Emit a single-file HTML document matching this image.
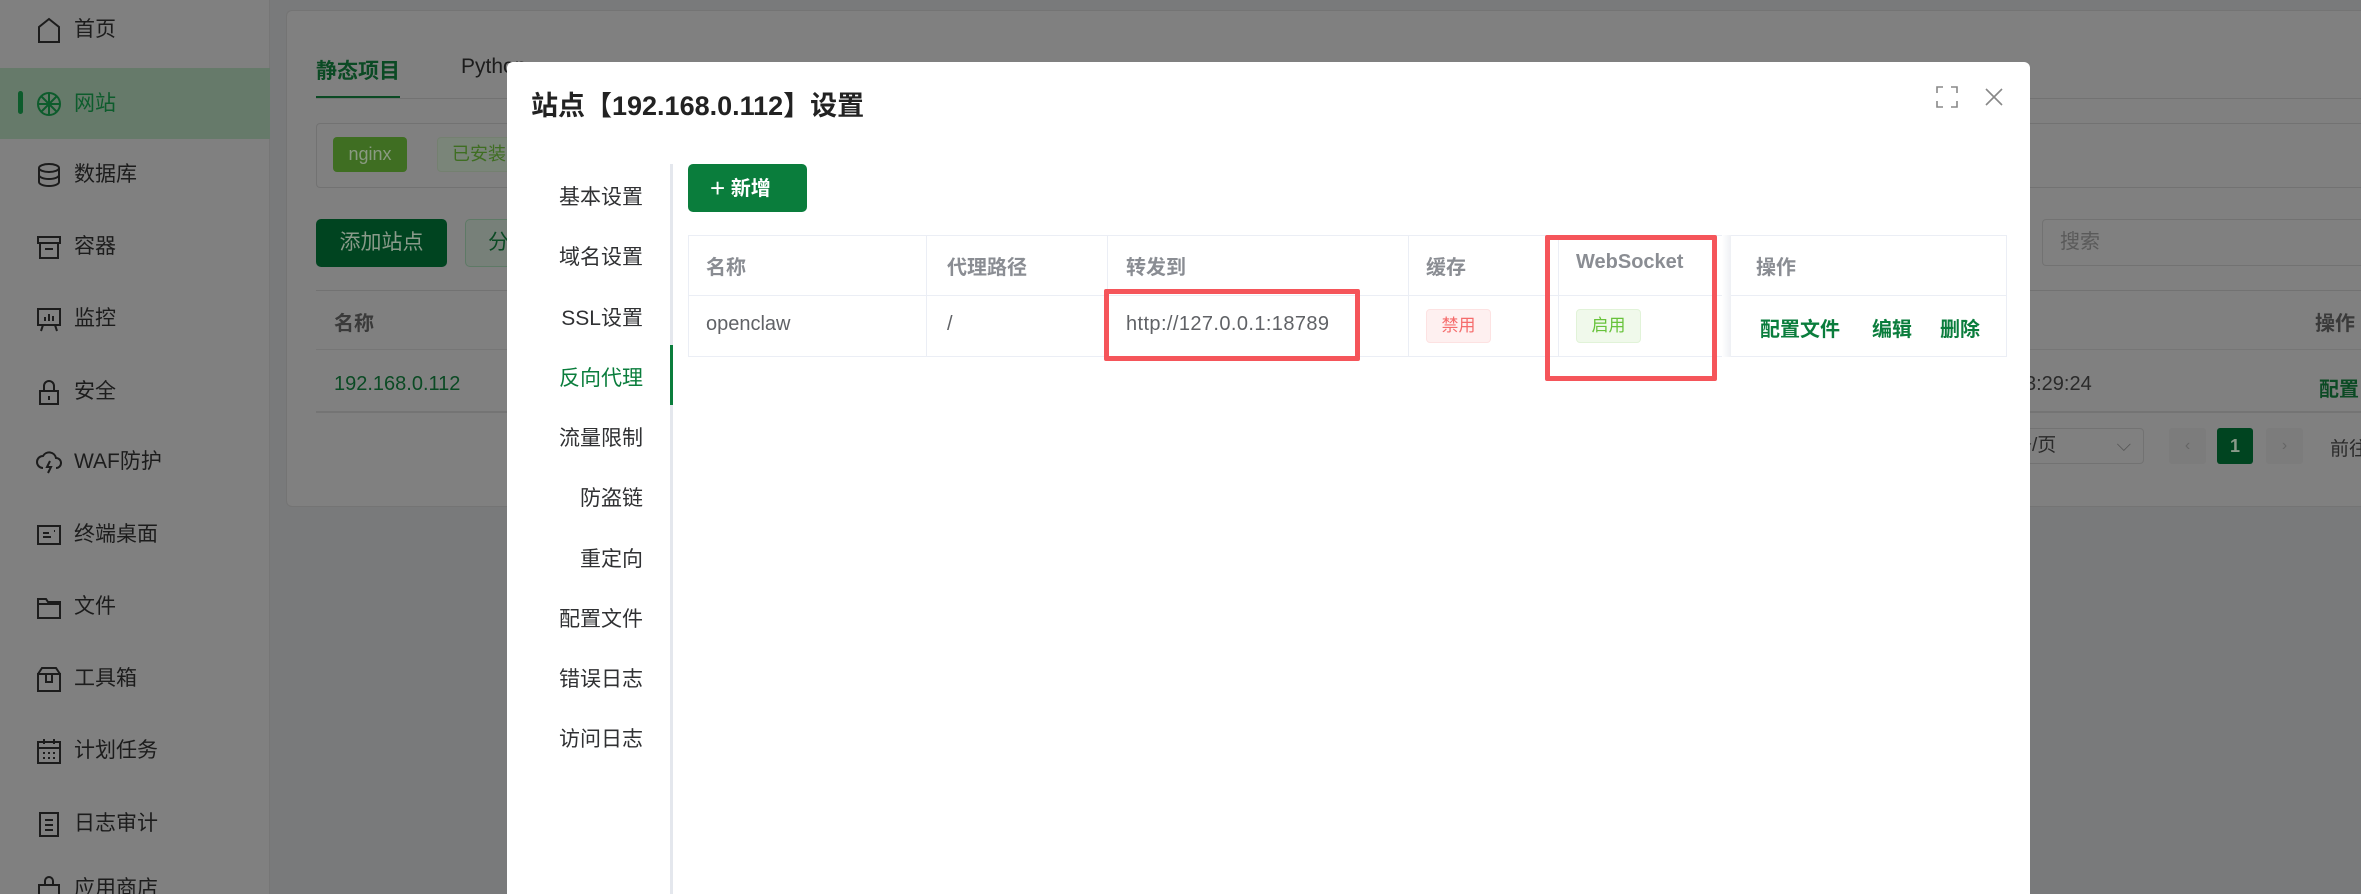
<!DOCTYPE html>
<html style="overflow:hidden;height:894px"><head><meta charset="utf-8"><style>
*{margin:0;padding:0;box-sizing:border-box}
body{width:2361px;height:894px;overflow:hidden;background:#797a7b;font-family:"Liberation Sans","Noto Sans CJK SC",sans-serif;position:relative;color:#1c1c1c}
.a{position:absolute;white-space:nowrap}
.side{left:0;top:0;width:270px;height:894px;background:#808080;border-right:1px solid #767676}
.si{left:0;width:270px;height:72px;font-size:21px;line-height:72px;overflow:hidden}
.si svg{position:absolute;left:35px;top:22px;width:28px;height:28px;fill:none;stroke:#1c1c1c;stroke-width:2}
.si span{position:absolute;left:74px}
.card{left:286px;top:10px;width:2075px;height:497px;background:#808080;border:1px solid #747474;border-right:none;border-radius:6px 0 0 6px}
.modal{left:507px;top:62px;width:1523px;height:832px;background:#fff;border-radius:6px 6px 0 0;overflow:hidden}
.mi{font-size:21px;color:#303133;right:0}
.th{font-size:20px;color:#8a8d93;font-weight:bold}
.td{font-size:20px;color:#606266}
.vl{position:absolute;width:1px;background:#ebeef5}
.op{font-size:20px;color:#0a7d3c;font-weight:bold}
</style></head><body>
<div class="a side"></div>
<div class="a si" style="top:0;height:60px;line-height:60px"><svg viewBox="0 0 28 28" style="top:16px"><path d="M4 26V11L14 3l10 8v15z"/></svg><span>首页</span></div>
<div class="a si" style="top:68px;background:#667a6a;height:71px"><div class="a" style="left:18px;top:23px;width:5px;height:23px;background:#0d5c2c;border-radius:3px"></div><svg viewBox="0 0 28 28" style="stroke:#0d5c2c"><circle cx="14" cy="14" r="11"/><path d="M14 3v22M3 14h22M6 6l16 16M22 6L6 22"/></svg><span style="color:#0d5c2c">网站</span></div>
<div class="a si" style="top:139px"><svg viewBox="0 0 28 28"><ellipse cx="14" cy="7" rx="10" ry="4"/><path d="M4 7v14c0 2 4 4 10 4s10-2 10-4V7M4 14c0 2 4 4 10 4s10-2 10-4"/></svg><span>数据库</span></div>
<div class="a si" style="top:211px"><svg viewBox="0 0 28 28"><path d="M3 4h22v6H3zM5 10v15h18V10M10 16h8"/></svg><span>容器</span></div>
<div class="a si" style="top:283px"><svg viewBox="0 0 28 28"><path d="M3 4h22v16H3zM10 16v-4M14 16v-7M18 16v-5M8 20l-2 6M20 20l2 6"/></svg><span>监控</span></div>
<div class="a si" style="top:356px"><svg viewBox="0 0 28 28"><path d="M5 13h18v13H5zM9 13V8a5 5 0 0110 0v5M14 18v4"/></svg><span>安全</span></div>
<div class="a si" style="top:426px"><svg viewBox="0 0 28 28"><path d="M8 20a6 6 0 010-12 7 7 0 0113 2 5 5 0 010 10M15 13l-3 6h4l-3 6"/></svg><span>WAF防护</span></div>
<div class="a si" style="top:499px"><svg viewBox="0 0 28 28"><path d="M3 5h22v18H3zM8 12h6M8 16h8M19 10h1"/></svg><span>终端桌面</span></div>
<div class="a si" style="top:571px"><svg viewBox="0 0 28 28"><path d="M3 6h8l2 3h12v16H3zM3 11h22"/></svg><span>文件</span></div>
<div class="a si" style="top:643px"><svg viewBox="0 0 28 28"><path d="M3 9h22v17H3zM3 9l4-6h14l4 6M11 9v8h6V9"/></svg><span>工具箱</span></div>
<div class="a si" style="top:715px"><svg viewBox="0 0 28 28"><path d="M3 5h22v21H3zM3 11h22M9 2v5M19 2v5M8 16h2M13 16h2M18 16h2M8 21h2M13 21h2M18 21h2"/></svg><span>计划任务</span></div>
<div class="a si" style="top:788px"><svg viewBox="0 0 28 28"><path d="M5 3h18v23H5zM10 10h8M10 15h8M10 20h8"/></svg><span>日志审计</span></div>
<div class="a si" style="top:853px;height:41px"><svg viewBox="0 0 28 28"><path d="M4 10h20v16H4zM10 10V6a4 4 0 018 0v4"/></svg><span>应用商店</span></div>

<div class="a card"></div>
<div class="a" style="left:316px;top:55px;font-size:21px;color:#0b4a24;font-weight:bold">静态项目</div>
<div class="a" style="left:316px;top:96px;width:84px;height:3px;background:#0b4a24"></div>
<div class="a" style="left:316px;top:98px;width:2045px;height:1px;background:#727272"></div>
<div class="a" style="left:461px;top:55px;font-size:21px">Python</div>
<div class="a" style="left:316px;top:123px;width:2045px;height:65px;border:1px solid #727272;border-right:none;border-radius:4px 0 0 4px"></div>
<div class="a" style="left:333px;top:137px;width:74px;height:35px;background:#3f6e22;border-radius:4px;color:#8a9a82;font-size:18px;text-align:center;line-height:35px">nginx</div>
<div class="a" style="left:437px;top:137px;width:80px;height:35px;background:#7a8579;border:1px solid #748070;border-radius:4px;color:#3f6e22;font-size:18px;line-height:33px;padding-left:14px">已安装</div>
<div class="a" style="left:316px;top:219px;width:131px;height:48px;background:#004420;border-radius:5px;color:#8a9a8a;font-size:21px;text-align:center;line-height:48px">添加站点</div>
<div class="a" style="left:465px;top:219px;width:80px;height:48px;border:1px solid #5e7a66;background:#778079;border-radius:5px;color:#0b4a24;font-size:21px;line-height:46px;padding-left:22px">分</div>
<div class="a" style="left:2042px;top:219px;width:319px;height:47px;border:1px solid #727272;border-right:none;border-radius:4px 0 0 4px;color:#5a5a5a;font-size:20px;line-height:45px;padding-left:17px">搜索</div>
<div class="a" style="left:316px;top:290px;width:2045px;height:1px;background:#727272"></div>
<div class="a" style="left:334px;top:307px;font-size:20px;color:#3a3a3a;font-weight:bold">名称</div>
<div class="a" style="left:2315px;top:307px;font-size:20px;color:#3a3a3a;font-weight:bold">操作</div>
<div class="a" style="left:316px;top:349px;width:2045px;height:1px;background:#767676"></div>
<div class="a" style="left:334px;top:373px;font-size:20px;color:#0b4a24">192.168.0.112</div>
<div class="a" style="left:2025px;top:373px;font-size:20px;color:#2a2a2a">3:29:24</div>
<div class="a" style="left:2319px;top:373px;width:42px;overflow:hidden;font-size:20px;color:#0b4a24;font-weight:bold">配置</div>
<div class="a" style="left:316px;top:411px;width:2045px;height:2px;background:#747474"></div>
<div class="a" style="left:2012px;top:428px;width:132px;height:36px;border:1px solid #727272;border-radius:4px;font-size:19px;line-height:34px;color:#2a2a2a">条/页<span style="position:absolute;right:12px;color:#555">⌵</span></div>
<div class="a" style="left:2169px;top:428px;width:37px;height:36px;background:#7c7c7c;border-radius:3px;color:#666;text-align:center;line-height:36px">‹</div>
<div class="a" style="left:2217px;top:428px;width:36px;height:36px;background:#004420;border-radius:3px;color:#8a9a8a;text-align:center;line-height:36px;font-size:18px;font-weight:bold">1</div>
<div class="a" style="left:2266px;top:428px;width:37px;height:36px;background:#7c7c7c;border-radius:3px;color:#666;text-align:center;line-height:36px">›</div>
<div class="a" style="left:2330px;top:434px;width:31px;overflow:hidden;font-size:19px;color:#2a2a2a">前往</div>

<div class="a modal">
<div class="a" style="left:24px;top:22px;font-size:27px;font-weight:bold;color:#222">站点【192.168.0.112】设置</div>
<svg class="a" style="left:1429px;top:24px" width="22" height="22" viewBox="0 0 22 22" fill="none" stroke="#888" stroke-width="1.6"><path d="M1 7V1h6M15 1h6v6M21 15v6h-6M7 21H1v-6"/></svg>
<svg class="a" style="left:1477px;top:25px" width="20" height="20" viewBox="0 0 20 20" fill="none" stroke="#888" stroke-width="1.6"><path d="M2 2l16 16M18 2L2 18"/></svg>
<div class="a" style="left:0;top:102px;width:136px;height:700px">
<div class="a mi" style="top:17px">基本设置</div>
<div class="a mi" style="top:77px">域名设置</div>
<div class="a mi" style="top:138px">SSL设置</div>
<div class="a mi" style="top:198px;color:#0a7d3c">反向代理</div>
<div class="a mi" style="top:258px">流量限制</div>
<div class="a mi" style="top:318px">防盗链</div>
<div class="a mi" style="top:379px">重定向</div>
<div class="a mi" style="top:439px">配置文件</div>
<div class="a mi" style="top:499px">错误日志</div>
<div class="a mi" style="top:559px">访问日志</div>
</div>
<div class="a" style="left:163px;top:102px;width:3px;height:730px;background:#e4e7ed"></div>
<div class="a" style="left:163px;top:283px;width:3px;height:60px;background:#0a7d3c"></div>
<div class="a" style="left:181px;top:102px;width:119px;height:48px;background:#0a7d3c;border-radius:5px;color:#fff;font-size:20px;font-weight:bold;line-height:48px;padding-left:22px"><span style="font-weight:normal;font-size:26px;vertical-align:-2px">+</span> 新增</div>
<div class="a" style="left:181px;top:173px;width:1319px;height:122px;border:1px solid #ebeef5"></div>
<div class="a" style="left:181px;top:233px;width:1319px;height:1px;background:#ebeef5"></div>
<div class="vl" style="left:419px;top:173px;height:122px"></div>
<div class="vl" style="left:600px;top:173px;height:122px"></div>
<div class="vl" style="left:901px;top:173px;height:122px"></div>
<div class="vl" style="left:1051px;top:173px;height:122px"></div>
<div class="a" style="left:1215px;top:173px;width:9px;height:122px;background:linear-gradient(90deg,#fff,#eef0f4)"></div>
<div class="a th" style="left:199px;top:189px">名称</div>
<div class="a th" style="left:440px;top:189px">代理路径</div>
<div class="a th" style="left:619px;top:189px">转发到</div>
<div class="a th" style="left:919px;top:189px">缓存</div>
<div class="a th" style="left:1069px;top:189px">WebSocket</div>
<div class="a th" style="left:1249px;top:189px">操作</div>
<div class="a td" style="left:199px;top:251px">openclaw</div>
<div class="a td" style="left:440px;top:251px">/</div>
<div class="a td" style="left:619px;top:251px;letter-spacing:0.4px">http://127.0.0.1:18789</div>
<div class="a" style="left:919px;top:247px;width:65px;height:34px;background:#fef0f0;border:1px solid #fde2e2;border-radius:4px;color:#f56c6c;font-size:17px;text-align:center;line-height:32px">禁用</div>
<div class="a" style="left:1069px;top:247px;width:65px;height:34px;background:#f0f9eb;border:1px solid #e1f3d8;border-radius:4px;color:#67c23a;font-size:17px;text-align:center;line-height:32px">启用</div>
<div class="a op" style="left:1253px;top:251px">配置文件</div>
<div class="a op" style="left:1365px;top:251px">编辑</div>
<div class="a op" style="left:1433px;top:251px">删除</div>
<div class="a" style="left:597px;top:227px;width:256px;height:72px;border:5px solid #f5555a;border-radius:2px"></div>
<div class="a" style="left:1038px;top:173px;width:172px;height:146px;border:5px solid #f5555a;border-radius:2px"></div>
</div>
</body></html>
